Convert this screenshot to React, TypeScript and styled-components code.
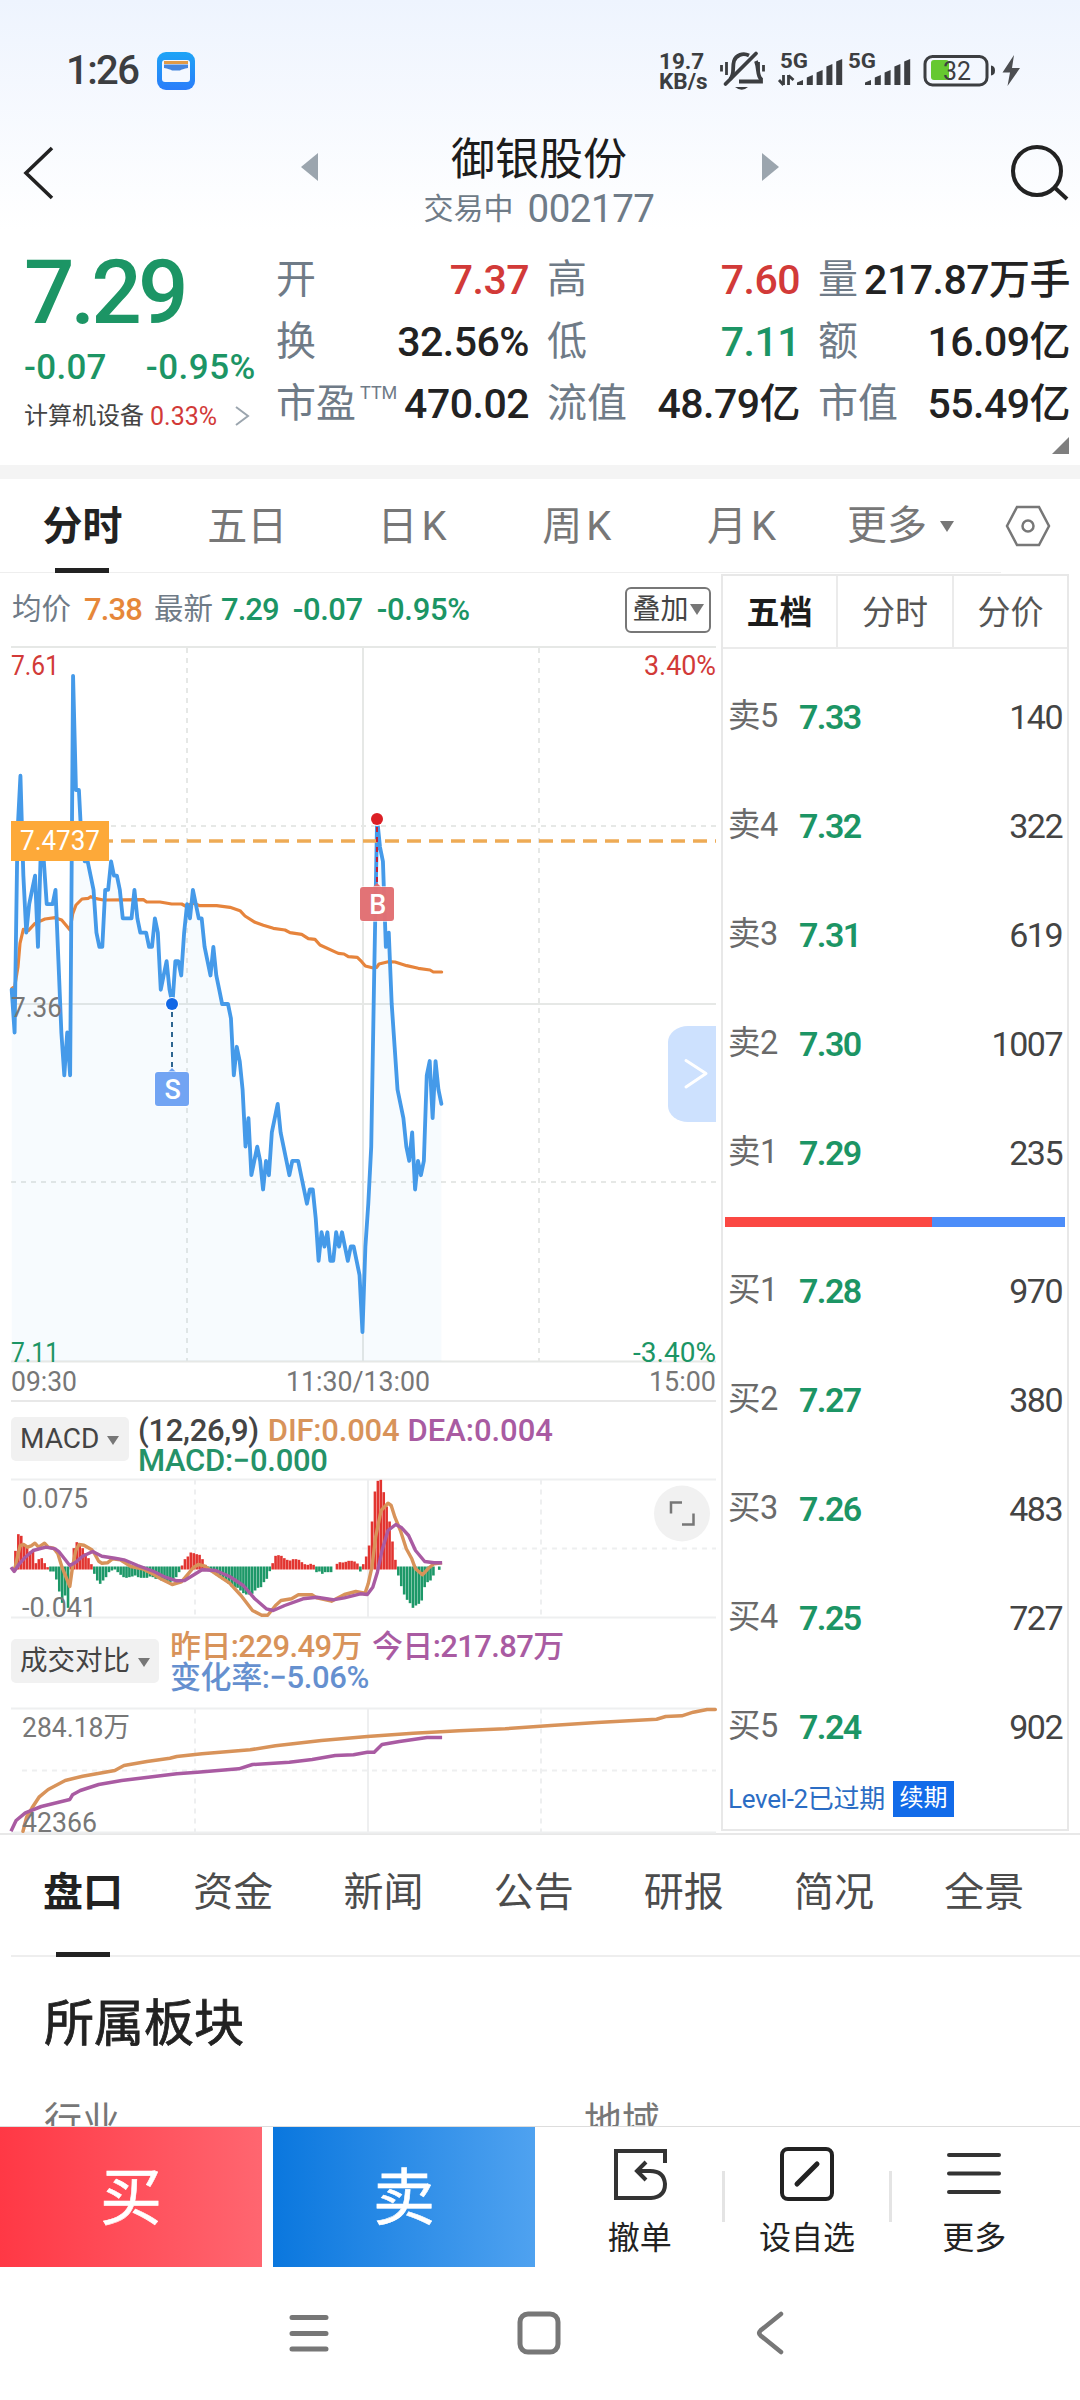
import React from "react";
import styled, { createGlobalStyle } from "styled-components";

const GREEN = "#1c9565";
const RED = "#d23a38";
const INK = "#222";
const SLATE = "#6f7b87";
const ORANGE = "#e6873a";

const Global = createGlobalStyle`
  * { box-sizing: border-box; }
  html, body { margin: 0; padding: 0; background: #fff; }
  body { font-family: Roboto, "Noto Sans CJK SC", sans-serif; color: ${INK}; }
  svg { display: block; flex: none; overflow: visible; }
  svg text { font-family: Roboto, "Noto Sans CJK SC", sans-serif; }
`;

const Screen = styled.div`
  width: 1080px;
  height: 2400px;
  overflow: hidden;
  display: flex;
  flex-direction: column;
  background: linear-gradient(#eef4fe 0, #fff 230px);
`;

const Txt = styled.span<{ $s: number; $c?: string; $w?: number; $ls?: number; $ml?: number }>`
  font-size: ${(p) => p.$s}px;
  color: ${(p) => p.$c ?? INK};
  font-weight: ${(p) => p.$w ?? 400};
  letter-spacing: ${(p) => p.$ls ?? 0}px;
  margin-left: ${(p) => p.$ml ?? 0}px;
  white-space: nowrap;
  line-height: 1;
`;

/* ---------- status bar ---------- */
const StatusBar = styled.div`
  height: 120px;
  padding: 22px 57px 0 66px;
  display: flex;
  align-items: center;
  flex: none;
`;
const Spacer = styled.div`flex: 1;`;
const AppIcon = styled.div`
  width: 38px;
  height: 38px;
  margin-left: 19px;
  border-radius: 9px;
  background: linear-gradient(#1ea4f6, #2a7dfa);
  display: flex;
  align-items: center;
  justify-content: center;
`;
const Speed = styled.div`
  display: flex;
  flex-direction: column;
  font-size: 22.5px;
  font-weight: 700;
  line-height: 20px;
  color: #3c3e41;
  width: 56px;
`;

/* ---------- title ---------- */
const TitleBar = styled.div`
  height: 120px;
  padding: 0 11px 0 23px;
  display: flex;
  justify-content: space-between;
  flex: none;
`;
const TitleSwitch = styled.div`
  width: 478px;
  display: flex;
  justify-content: space-between;
`;
const TitleText = styled.div`
  display: flex;
  flex-direction: column;
  align-items: center;
  padding: 18px 2px 0 0;
  gap: 5px;
`;
const SubTitle = styled.div`
  display: flex;
  align-items: center;
  gap: 14px;
  height: 44px;
`;
const IconTop = styled.div<{ $t: number; $w?: number }>`
  padding-top: ${(p) => p.$t}px;
  width: ${(p) => (p.$w ? `${p.$w}px` : "auto")};
`;

/* ---------- quote ---------- */
const Quote = styled.div`
  height: 225px;
  display: flex;
  flex: none;
  padding: 0 10px 0 24px;
`;
const QuoteMain = styled.div`
  width: 252px;
  padding-top: 1px;
  display: flex;
  flex-direction: column;
`;
const Line = styled.div<{ $h: number }>`
  height: ${(p) => p.$h}px;
  display: flex;
  align-items: center;
`;
const Stats = styled.div`
  flex: 1;
  display: grid;
  grid-template-columns: 253px 253px 252px;
  grid-template-rows: 62px 62px 62px 1fr;
  column-gap: 18px;
  padding-top: 9px;
`;
const Stat = styled.div`
  display: flex;
  align-items: center;
  justify-content: space-between;
  white-space: nowrap;
`;
const StatLabel = styled.div`display: flex;`;
const Corner = styled.div`
  grid-column: 1 / -1;
  justify-self: end;
  margin: 2px 1px 0 0;
`;
const Band = styled.div`height: 14px; background: #f4f4f4; flex: none;`;

/* ---------- tabs ---------- */
const PeriodTabs = styled.div`
  height: 94px;
  display: flex;
  flex: none;
  background: linear-gradient(#eee, #eee) 0 100% / 1001px 1px no-repeat;
`;
const Tab = styled.div<{ $w: number; $on?: boolean; $c: string; $gap: number }>`
  width: ${(p) => p.$w}px;
  flex: none;
  display: flex;
  flex-direction: column;
  align-items: center;
  justify-content: space-between;
  font-size: 40px;
  line-height: 60px;
  padding-top: ${(p) => p.$gap}px;
  font-weight: ${(p) => (p.$on ? 700 : 400)};
  color: ${(p) => (p.$on ? INK : p.$c)};
  &::after {
    content: "";
    width: 54px;
    height: 5px;
    background: ${(p) => (p.$on ? INK : "transparent")};
  }
`;
const MoreTab = styled.div`
  display: flex;
  align-items: center;
  width: 160px;
  height: 92px;
  padding: 2px 0 0 23px;
  gap: 13px;
`;

/* ---------- body ---------- */
const Body = styled.div`
  display: flex;
  height: 1262px;
  flex: none;
  padding-left: 11px;
  border-bottom: 2px solid #e8e8e8;
`;
const ChartColumn = styled.div`
  width: 710px;
  display: flex;
  flex-direction: column;
`;
const ChartHead = styled.div`
  height: 73px;
  display: flex;
  align-items: center;
`;
const Overlay = styled.div`
  width: 86px;
  height: 46px;
  margin-right: 10px;
  border: 2px solid #777;
  border-radius: 6px;
  display: flex;
  align-items: center;
  justify-content: center;
  gap: 1px;
`;
const IndicatorHead = styled.div<{ $h: number; $pt: number; $rule?: boolean }>`
  height: ${(p) => p.$h}px;
  display: flex;
  padding-top: ${(p) => p.$pt}px;
  gap: ${(p) => (p.$rule ? 9 : 11)}px;
  width: 705px;
  border-top: ${(p) => (p.$rule ? "2px solid #e8e8e8" : "none")};
`;
const Chip = styled.div<{ $w: number }>`
  width: ${(p) => p.$w}px;
  height: 44px;
  flex: none;
  background: #f1f1f1;
  border-radius: 5px;
  display: flex;
  align-items: center;
  padding-left: 9px;
  gap: 8px;
  svg { margin-top: 3px; }
`;
const Values = styled.div<{ $mt: number }>`
  margin-top: ${(p) => p.$mt}px;
`;
const ValueRow = styled.div<{ $h: number }>`
  height: ${(p) => p.$h}px;
  display: flex;
  span { line-height: 34px; }
`;

/* ---------- order book ---------- */
const Book = styled.div`
  width: 348px;
  margin-top: 1px;
  height: 1257px;
  border: 2px solid #e8e8e8;
  display: flex;
  flex-direction: column;
`;
const BookTabs = styled.div`
  display: grid;
  grid-template-columns: 113px 116px 115px;
  height: 73px;
  flex: none;
  border-bottom: 2px solid #ebebeb;
`;
const BookTab = styled.div<{ $on?: boolean }>`
  display: flex;
  align-items: center;
  justify-content: center;
  padding-top: 2px;
  font-size: 33px;
  line-height: 1;
  color: ${(p) => (p.$on ? "#1c1c1c" : "#555")};
  font-weight: ${(p) => (p.$on ? 700 : 400)};
  & + & { border-left: 2px solid #ebebeb; }
`;
const BookRow = styled.div`
  height: 109px;
  flex: none;
  display: grid;
  grid-template-columns: 71px 1fr auto;
  align-items: center;
  padding: 2px 5px 0 5px;
`;
const Balance = styled.div`
  height: 10px;
  margin: 11px 2px 8px 2px;
  flex: none;
  display: grid;
  grid-template-columns: 207px 1fr;
  background: #4c8df9;
  &::before { content: ""; background: #fb4843; }
`;
const LevelRow = styled.div`
  height: 37px;
  display: flex;
  align-items: center;
  padding-left: 5px;
  gap: 8px;
`;
const Renew = styled.div`
  width: 61px;
  height: 36px;
  background: #126be9;
  color: #fff;
  font-size: 24px;
  line-height: 34px;
  text-align: center;
`;

/* ---------- bottom ---------- */
const InfoTabs = styled.div`
  height: 122px;
  padding-left: 8px;
  display: flex;
  flex: none;
  background: linear-gradient(#eee, #eee) 11px 100% / 100% 2px no-repeat;
`;
const Section = styled.div`
  height: 169px;
  flex: none;
  overflow: hidden;
  padding: 37px 44px 0;
`;
const SectionTitle = styled.div`
  font-size: 50px;
  line-height: 60px;
  -webkit-text-stroke: 0.8px currentColor;
`;
const SectionGrid = styled.div`
  display: grid;
  grid-template-columns: 540px 1fr;
  padding-top: 42px;
  font-size: 38px;
  line-height: 50px;
  color: #777;
`;
const ActionBar = styled.div`
  height: 141px;
  flex: none;
  display: flex;
  border-top: 1px solid #ddd;
`;
const TradeButton = styled.div<{ $from: string; $to: string }>`
  width: 262px;
  margin-right: 11px;
  background: linear-gradient(90deg, ${(p) => p.$from}, ${(p) => p.$to});
  color: #fff;
  font-size: 62px;
  line-height: 143px;
  text-align: center;
  -webkit-text-stroke: 0.6px currentColor;
`;
const Actions = styled.div`
  flex: 1;
  display: flex;
  padding: 0 22px 0 10px;
`;
const Action = styled.div`
  flex: 1;
  display: flex;
  flex-direction: column;
  align-items: center;
  justify-content: space-between;
  padding: 19px 0 12px;
  font-size: 32px;
  line-height: 34px;
`;
const Divider = styled.div`width: 3px; margin: 44px -1.5px 45px; background: #e4e4e4;`;
const NavBar = styled.div`
  flex: 1;
  display: flex;
  justify-content: space-between;
  padding: 44px 296px 0 288px;
`;

/* ---------- data ---------- */
/* price per minute, in cents relative to the previous close (7.36) */
const PRICE = [
  1, -2, 12, 16, 9, 5, 7, 8, 9, 4, 11, 10, 7, 7, 7, 8, 3, -2, -5, -2, -5, 23, 15, 15, 11, 10, 10, 9, 8, 5, 4, 4, 8, 8, 10,
  9, 9, 8, 6, 6, 6, 6, 8, 6, 5, 5, 5, 4, 4, 6, 5, 1, 2, 3, 1, 0, 3, 3, 2, 5, 7, 6, 8, 7, 6, 6, 4, 3, 2, 4, 2, 1, 0, 0, 0,
  -1, -5, -3, -4, -6, -10, -8, -12, -11, -10, -11, -13, -11, -12, -9, -8, -7, -9, -10, -11, -12, -11, -11, -11, -12, -13,
  -14, -13, -13, -15, -18, -16, -17, -16, -18, -18, -16, -17, -16, -17, -18, -17, -17, -18, -19, -23, -17, -14, -10, 2, 13,
  11, 10, 4, 5, 0, -3, -6, -7, -8, -10, -11, -9, -13, -11, -12, -11, -5, -4, -8, -4, -6, -7,
];
const priceX = (m: number) => 35 + m * 8.77;
const priceY = (c: number) => 1092 - c * 42.8;
const pricePoints = PRICE.map((c, m) => `${priceX(m).toFixed(1)},${priceY(c).toFixed(1)}`).join(" ");

const AVERAGE =
  "36,1045 44,1040 54,980 60,910 70,868 85,872 105,850 135,837 165,833 185,840 210,870 218,822 228,795 246,777 265,775 272,770 285,775 310,780 430,779 440,786 480,786 515,792 545,792 556,798 580,790 600,797 650,797 690,802 720,812 735,828 765,847 790,856 820,865 855,870 870,878 905,883 925,896 945,898 960,915 1015,940 1032,942 1045,950 1072,952 1085,965 1096,978 1120,984 1130,982 1137,972 1165,965 1185,966 1220,977 1255,985 1290,990 1300,996 1325,996";

/* histogram heights, three units per pixel; positive above the axis */
const HIST = [
  0, 53, 103, 98, 73, 66, 51, 51, 16, 28, 31, 16, 4, -12, -12, -36, -72, -106, -84, -121, 16, 61, 79, 69, 61, 46, 31, 13,
  -19, -39, -49, -39, -29, -14, -9, -6, -14, -22, -29, -31, -29, -27, -24, -29, -31, -31, -31, -27, -29, -34, -34, -39, -39,
  -41, -44, -41, -29, -14, 9, 28, 36, 48, 46, 43, 41, 28, 11, -9, -14, -19, -25, -31, -37, -41, -49, -57, -59, -61, -69,
  -77, -81, -81, -79, -69, -61, -59, -44, -34, -11, 16, 38, 40, 38, 31, 26, 24, 28, 28, 26, 19, 13, 11, 14, 11, -14, -12,
  -19, -14, -14, -14, 0, 14, 19, 18, 20, 23, 23, 21, 15, -12, 13, 36, 69, 141, 231, 263, 266, 229, 186, 141, 81, 26, -24,
  -56, -81, -97, -107, -121, -114, -109, -99, -59, -44, -39, -24, 0, -7,
];

type P = [number, number];
const DIF: P[] = [[27,540],[33,530],[38,500],[44,465],[52,462],[60,470],[68,466],[76,458],[84,470],[97,458],[105,470],[117,473],[126,490],[135,530],[152,588],[158,530],[165,480],[172,462],[183,464],[200,478],[206,490],[215,512],[222,518],[234,517],[245,505],[262,508],[285,528],[310,535],[335,552],[350,565],[375,582],[395,574],[410,550],[422,530],[432,522],[445,526],[470,550],[500,578],[525,615],[550,660],[570,674],[583,674],[600,645],[612,630],[635,625],[650,613],[680,613],[690,622],[722,632],[750,612],[775,603],[795,608],[802,580],[810,530],[818,440],[830,360],[845,338],[852,345],[860,380],[872,420],[885,475],[897,505],[905,535],[920,553],[932,535],[945,520],[963,517]];
const DEA: P[] = [[24,530],[31,543],[42,520],[55,500],[72,480],[100,470],[120,475],[128,483],[152,525],[165,515],[180,497],[202,483],[222,497],[250,503],[270,508],[300,525],[335,543],[360,560],[385,571],[402,570],[440,538],[470,540],[500,558],[530,585],[555,625],[580,655],[595,660],[620,645],[660,625],[690,620],[725,628],[750,622],[785,610],[800,612],[812,590],[822,545],[832,480],[845,420],[862,402],[875,412],[890,435],[905,480],[925,513],[945,517],[963,517]];
const YESTERDAY: P[] = [[50,662],[58,620],[70,592],[85,560],[105,537],[142,510],[180,497],[250,480],[270,465],[320,453],[370,443],[385,438],[440,430],[545,418],[600,406],[700,390],[800,378],[900,368],[1000,361],[1100,355],[1200,345],[1300,336],[1430,326],[1450,318],[1485,316],[1510,305],[1540,297],[1558,297]];
const TODAY: P[] = [[24,662],[35,630],[55,607],[90,588],[152,567],[158,553],[175,540],[215,522],[265,510],[385,490],[430,485],[520,475],[550,462],[630,455],[680,447],[730,435],[770,433],[800,425],[815,425],[832,402],[870,393],[930,381],[963,381]];
const plot = (pts: P[], top: number) => pts.map(([x, y]) => `${(x / 2.178).toFixed(1)},${(top + y / 3).toFixed(1)}`).join(" ");

const Label = ({ x, y, w, c, s = 28, end, children }: { x: number; y: number; w: number; c: string; s?: number; end?: boolean; children: string }) => (
  <text x={x} y={y} fill={c} fontSize={s} textLength={w} lengthAdjust="spacingAndGlyphs" textAnchor={end ? "end" : "start"}>{children}</text>
);

const Caret = ({ w, h, c = "#777" }: { w: number; h: number; c?: string }) => (
  <svg width={w} height={h} viewBox="0 0 10 10" preserveAspectRatio="none"><path d="M0 0H10L5 10Z" fill={c} /></svg>
);

const Marker = ({ x, dot, top, letter, fill, stroke }: { x: number; dot: number; top: number; letter: string; fill: string; stroke: string }) => (
  <g>
    <path d={`M${x} ${dot + 8}V${top - 3}`} stroke={letter === "S" ? "#2d6590" : "#c02038"} strokeWidth="2" strokeDasharray="5 5" />
    <circle cx={x} cy={dot} r="7" fill="#fff" />
    <circle cx={x} cy={dot} r="6" fill={stroke} />
    <path d={`M${x - 4} ${top}L${x} ${top - 4}L${x + 4} ${top}Z`} fill={fill} />
    <rect x={x - 18} y={top - 1} width="36" height="36" rx="4" fill="#fff" opacity="0.6" />
    <rect x={x - 17} y={top} width="34" height="34" rx="3" fill={fill} opacity="0.95" />
    <text x={x + 0.7} y={top + 27} fontSize="27" fontWeight="500" fill="#fff" textAnchor="middle">{letter}</text>
  </g>
);

const PriceChart = () => (
  <svg width="706" height="754" viewBox="11 646 706 754">
    <g stroke="#e6e8e6" strokeWidth="2" fill="none">
      <path d="M11 647H716M11 1004H716M11 1361.5H716M363 647V1362" />
      <path d="M187 648V1361M539 648V1361" strokeDasharray="5 5" />
      <path d="M11 826H716M11 1182H716" strokeDasharray="5 5" />
    </g>
    <g transform="translate(0 640) scale(0.33333)">
      <polygon points={`35,2163 ${pricePoints} ${priceX(PRICE.length - 1)},2163`} fill="#3c97ee" opacity="0.045" />
      <polyline points={AVERAGE} fill="none" stroke="#e6843c" strokeWidth="9.500" strokeLinejoin="round" strokeLinecap="round" />
      <polyline points={pricePoints} fill="none" stroke="#459ae9" strokeWidth="11.500" strokeLinejoin="round" strokeLinecap="round" />
    </g>
    <path d="M121 841H716" stroke="#eeab55" strokeWidth="3.4" strokeDasharray="14 8" />
    <rect x="11" y="821" width="98" height="40" fill="#fda939" />
    <path d="M109 841h4" stroke="#eeab55" strokeWidth="3.4" />
    <Label x={20} y={850} w={80} c="#fff" s={27}>7.4737</Label>
    <Marker x={172} dot={1004} top={1072} letter="S" fill="#6a9ff2" stroke="#1268e6" />
    <Marker x={377} dot={819} top={887} letter="B" fill="#e06c6f" stroke="#dc1f25" />
    <Label x={11} y={674.5} w={48} c={RED}>7.61</Label>
    <Label x={716} y={675} w={72} c={RED} end>3.40%</Label>
    <Label x={11} y={1016.5} w={51} c="#777">7.36</Label>
    <Label x={11} y={1361.5} w={48} c={GREEN}>7.11</Label>
    <Label x={716} y={1362} w={83} c={GREEN} end>-3.40%</Label>
    <Label x={11} y={1390.5} w={66} c="#777">09:30</Label>
    <Label x={286} y={1390.5} w={144} c="#777">11:30/13:00</Label>
    <Label x={716} y={1390.5} w={67} c="#777" end>15:00</Label>
    <path d="M716 1026H688a20 16 0 0 0-20 16V1106a20 16 0 0 0 20 16H716Z" fill="#cde1fe" />
    <path d="M686 1060.500L706 1073.500L686 1087" fill="none" stroke="#fff" strokeWidth="3" strokeLinecap="round" strokeLinejoin="round" />
  </svg>
);

const SubGrid = ({ top, mid, bottom }: { top: number; mid: number; bottom: number }) => (
  <g stroke="#eeeff0" strokeWidth="2" fill="none">
    <path d={`M11 ${top}H716M11 ${bottom}H716M368 ${top}V${bottom}`} />
    <path d={`M195 ${top}V${bottom}M541 ${top}V${bottom}M22 ${mid}H716`} strokeDasharray="5 5" />
  </g>
);

const MacdChart = () => (
  <svg width="706" height="141" viewBox="11 1476.500 706 141">
    <SubGrid top={1479} mid={1548} bottom={1617} />
    {HIST.map((h, i) =>
      h === 0 ? null : (
        <rect key={i} x={11.2 + i * 2.923} width="2.600" y={h > 0 ? 1568 - h / 3 : 1566} height={Math.abs(h) / 3 + 1} fill={h > 0 ? "#e23430" : "#1d9868"} />
      )
    )}
    <polyline points={plot(DIF, 1390)} fill="none" stroke="#d8935a" strokeWidth="3.400" strokeLinejoin="round" />
    <polyline points={plot(DEA, 1390)} fill="none" stroke="#a95ba2" strokeWidth="3.400" strokeLinejoin="round" />
    <Label x={22} y={1507.5} w={66} c="#777">0.075</Label>
    <Label x={22} y={1616} w={75} c="#777">-0.041</Label>
    <circle cx="682" cy="1513" r="28" fill="#f1f1f1" />
    <path d="M671 1513V1502H682M693.500 1513V1524H682" fill="none" stroke="#777" strokeWidth="2.500" />
  </svg>
);

const VolumeChart = () => (
  <svg width="706" height="127" viewBox="11 1705.500 706 127">
    <SubGrid top={1708} mid={1770} bottom={1832} />
    <polyline points={plot(YESTERDAY, 1610)} fill="none" stroke="#d8935a" strokeWidth="3.500" strokeLinejoin="round" strokeLinecap="round" />
    <polyline points={plot(TODAY, 1610)} fill="none" stroke="#a95ba2" strokeWidth="3.500" strokeLinejoin="round" />
    <Label x={22} y={1736} w={108} c="#777">284.18万</Label>
    <Label x={22} y={1831} w={75} c="#777">42366</Label>
  </svg>
);

const StatusIcons = () => (
  <svg width="308" height="44" viewBox="715 48 308 44">
    <g fill="none" stroke="#3c3e41" strokeWidth="3.800">
      <path d="M730 78C735 74 732 66 734 60C736 54 743 51.500 749 54.500M756 60C759 68 757 75 761 78V80.500H739" />
      <path d="M725.500 83L756 52.500" strokeLinecap="round" />
      <path d="M721.500 64V70.500M726.500 61V74M758.500 61V74M763.500 64V70.500" strokeWidth="2.800" />
    </g>
    <path d="M735 86H748Q742 91.500 735 86Z" fill="#3c3e41" />
    <text x="780" y="67" fontSize="20.500" fontWeight="700" fill="#3c3e41" textLength="28" lengthAdjust="spacingAndGlyphs">5G</text>
    <text x="848" y="67" fontSize="20.500" fontWeight="700" fill="#3c3e41" textLength="28" lengthAdjust="spacingAndGlyphs">5G</text>
    <g stroke="#3c3e41" strokeWidth="2.800" fill="none">
      <path d="M783.500 74V84M788.500 74V84" /><path d="M779 79L783.500 84M788.500 74.500L793.500 79" />
    </g>
    {[0, 68].map((o) => (
      <g key={o} fill="#3c3e41">
        {[7, 12, 17, 23, 28].map((h, i) => (
          <path key={h} d={`M${797 + o + i * 9.800} ${86 - h + 2.500}l6 -2.500V84h-6Z`} />
        ))}
      </g>
    ))}
    <rect x="925" y="55.500" width="62" height="28.500" rx="7.500" fill="none" stroke="#3c3e41" strokeWidth="3" />
    <rect x="931" y="59" width="18" height="20" rx="3" fill="#66c830" />
    <text x="943" y="79" fontSize="26" fill="#3c3e41" textLength="28" lengthAdjust="spacingAndGlyphs">32</text>
    <path d="M991 64.500Q995 65 995 69.500Q995 74 991 74.500Z" fill="#3c3e41" />
    <path d="M1014 54L1002.500 71.500H1010L1007.500 85L1020 67H1012Z" fill="#4c4e51" />
  </svg>
);

const STATS: [string, string, string][] = [
  ["开", "7.37", RED], ["高", "7.60", RED], ["量", "217.87万手", INK],
  ["换", "32.56%", INK], ["低", "7.11", GREEN], ["额", "16.09亿", INK],
  ["市盈", "470.02", INK], ["流值", "48.79亿", INK], ["市值", "55.49亿", INK],
];
const SELLS = [["卖5", "7.33", "140"], ["卖4", "7.32", "322"], ["卖3", "7.31", "619"], ["卖2", "7.30", "1007"], ["卖1", "7.29", "235"]];
const BUYS = [["买1", "7.28", "970"], ["买2", "7.27", "380"], ["买3", "7.26", "483"], ["买4", "7.25", "727"], ["买5", "7.24", "902"]];

const BookLine = ({ row }: { row: string[] }) => (
  <BookRow>
    <Txt $s={32.5} $c="#6a6a6a" $ls={-0.5}>{row[0]}</Txt>
    <Txt $s={34} $c={GREEN} $w={600} $ls={-1.6}>{row[1]}</Txt>
    <Txt $s={34} $c="#444" $ls={-1.5}>{row[2]}</Txt>
  </BookRow>
);

export default function App() {
  return (
    <Screen>
      <Global />
      <StatusBar>
        <Txt $s={40} $c="#3c3e41" $w={500} $ls={-1.6}>1:26</Txt>
        <AppIcon>
          <svg width="28" height="22" viewBox="0 0 28 22">
            <rect width="28" height="22" rx="3" fill="#f4f8ff" />
            <rect x="2" y="1" width="24" height="3" fill="#e29a45" />
            <path d="M2 4.500H26V8Q20 9 18 10.500H10Q8 9 2 8Z" fill="#4585de" />
          </svg>
        </AppIcon>
        <Spacer />
        <Speed><span>19.7</span><span>KB/s</span></Speed>
        <StatusIcons />
      </StatusBar>

      <TitleBar>
        <IconTop $t={26} $w={48}>
          <svg width="32" height="54" viewBox="0 0 32 54"><path d="M29 2L3 27L29 52" fill="none" stroke={INK} strokeWidth="3.600" /></svg>
        </IconTop>
        <TitleSwitch>
          <IconTop $t={33}><svg width="17" height="28" viewBox="0 0 17 28"><path d="M17 0V28L0 14Z" fill="#9ba5ae" /></svg></IconTop>
          <TitleText>
            <Txt $s={44} $c="#1c1c1c">御银股份</Txt>
            <SubTitle>
              <Txt $s={30} $c={SLATE}>交易中</Txt>
              <Txt $s={38.5} $c={SLATE} $ls={-0.5}>002177</Txt>
            </SubTitle>
          </TitleText>
          <IconTop $t={33}><svg width="17" height="28" viewBox="0 0 17 28"><path d="M0 0V28L17 14Z" fill="#9ba5ae" /></svg></IconTop>
        </TitleSwitch>
        <IconTop $t={24}>
          <svg width="60" height="58" viewBox="0 0 60 58">
            <circle cx="28" cy="27" r="24" fill="none" stroke={INK} strokeWidth="4" />
            <path d="M45 43L58 55" stroke={INK} strokeWidth="4" />
          </svg>
        </IconTop>
      </TitleBar>

      <Quote>
        <QuoteMain>
          <Line $h={102}><Txt $s={89} $c={GREEN} $w={500} $ls={-4}>7.29</Txt></Line>
          <Line $h={48}>
            <Txt $s={35} $c={GREEN} $w={500} $ls={0.3}>-0.07</Txt>
            <Txt $s={35} $c={GREEN} $w={500} $ml={39} $ls={0.5}>-0.95%</Txt>
          </Line>
          <Line $h={50}>
            <Txt $s={24} $c="#444">计算机设备</Txt>
            <Txt $s={25} $c={RED} $ml={6}>0.33%</Txt>
            <Spacer />
            <svg width="43" height="20" viewBox="0 0 43 20"><path d="M3 1L15 10L3 19" fill="none" stroke="#9ba5ae" strokeWidth="2" /></svg>
          </Line>
        </QuoteMain>
        <Stats>
          {STATS.map(([l, v, c]) => (
            <Stat key={l}>
              <StatLabel>
                <Txt $s={40} $c={SLATE}>{l}</Txt>
                {l === "市盈" && <Txt $s={18} $c={SLATE} $ml={4}>TTM</Txt>}
              </StatLabel>
              <Txt $s={41} $c={c} $w={500} $ls={-0.5}>{v}</Txt>
            </Stat>
          ))}
          <Corner><svg width="17" height="17" viewBox="0 0 17 17"><path d="M17 0V17H0Z" fill="#7f7f7f" /></svg></Corner>
        </Stats>
      </Quote>
      <Band />

      <PeriodTabs>
        {["分时", "五日", "日 K", "周 K", "月 K"].map((t, i) => (
          <Tab key={t} $w={164.8} $on={i === 0} $c="#777" $gap={18}>{t.replace(" ", "\u200a")}</Tab>
        ))}
        <MoreTab>
          <Txt $s={40} $c="#777">更多</Txt>
          <Caret w={14} h={11} />
        </MoreTab>
        <IconTop $t={26}>
          <svg width="88" height="42" viewBox="0 0 88 42">
            <path d="M33 2H55L65 21L55 40H33L23 21Z" fill="none" stroke="#777" strokeWidth="2.500" />
            <circle cx="44" cy="21" r="5.500" fill="none" stroke="#777" strokeWidth="2.500" />
          </svg>
        </IconTop>
      </PeriodTabs>

      <Body>
        <ChartColumn>
          <ChartHead>
            <Txt $s={29.5} $c={SLATE} $ml={1}>均价</Txt>
            <Txt $s={31} $c={ORANGE} $w={500} $ml={13} $ls={-0.9}>7.38</Txt>
            <Txt $s={29.5} $c={SLATE} $ml={12}>最新</Txt>
            <Txt $s={31} $c={GREEN} $w={500} $ml={8} $ls={-0.9}>7.29</Txt>
            <Txt $s={31} $c={GREEN} $w={500} $ml={14} $ls={-0.4}>-0.07</Txt>
            <Txt $s={31} $c={GREEN} $w={500} $ml={14} $ls={-0.3}>-0.95%</Txt>
            <Spacer />
            <Overlay><Txt $s={28} $c="#444">叠加</Txt><Caret w={14} h={11} /></Overlay>
          </ChartHead>
          <PriceChart />
          <IndicatorHead $h={77} $pt={15} $rule>
            <Chip $w={118}><Txt $s={28} $c="#444">MACD</Txt><Caret w={12} h={9} /></Chip>
            <Values $mt={-3}>
              <ValueRow $h={30}>
                <Txt $s={31} $c="#444" $w={500} $ls={-0.3}>(12,26,9)</Txt>
                <Txt $s={31} $c="#d8935a" $w={500} $ml={9} $ls={-0.2}>DIF:0.004</Txt>
                <Txt $s={31} $c="#a95ba2" $w={500} $ml={8}>DEA:0.004</Txt>
              </ValueRow>
              <ValueRow $h={29}><Txt $s={31} $c="#259268" $w={500} $ls={-0.3}>MACD:−0.000</Txt></ValueRow>
            </Values>
          </IndicatorHead>
          <MacdChart />
          <IndicatorHead $h={88} $pt={21}>
            <Chip $w={148}><Txt $s={27.5} $c="#444">成交对比</Txt><Caret w={12} h={9} /></Chip>
            <Values $mt={-9}>
              <ValueRow $h={31}>
                <Txt $s={31} $c="#d8935a" $w={500} $ls={-0.6}>昨日:229.49万</Txt>
                <Txt $s={31} $c="#a95ba2" $w={500} $ml={10} $ls={-0.6}>今日:217.87万</Txt>
              </ValueRow>
              <ValueRow $h={31}><Txt $s={31} $c="#6590cf" $w={500} $ls={-0.4}>变化率:−5.06%</Txt></ValueRow>
            </Values>
          </IndicatorHead>
          <VolumeChart />
        </ChartColumn>

        <Book>
          <BookTabs>
            <BookTab $on>五档</BookTab>
            <BookTab>分时</BookTab>
            <BookTab>分价</BookTab>
          </BookTabs>
          <Spacer />
          {SELLS.map((r) => <BookLine key={r[0]} row={r} />)}
          <Balance />
          {BUYS.map((r) => <BookLine key={r[0]} row={r} />)}
          <LevelRow>
            <Txt $s={26} $c="#2b6dc4" $ls={-0.3}>Level-2已过期</Txt>
            <Renew>续期</Renew>
          </LevelRow>
          <Spacer />
        </Book>
      </Body>

      <InfoTabs>
        {["盘口", "资金", "新闻", "公告", "研报", "简况", "全景"].map((t, i) => (
          <Tab key={t} $w={150.2} $on={i === 0} $c="#4c4c4c" $gap={28}>{t}</Tab>
        ))}
      </InfoTabs>
      <Section>
        <SectionTitle>所属板块</SectionTitle>
        <SectionGrid><span>行业</span><span>地域</span></SectionGrid>
      </Section>

      <ActionBar>
        <TradeButton $from="#ff3845" $to="#ff6670">买</TradeButton>
        <TradeButton $from="#0a77de" $to="#4fa2f0">卖</TradeButton>
        <Actions>
          <Action>
            <svg width="56" height="56" viewBox="0 0 56 56" fill="none" stroke="#333" strokeWidth="4">
              <path d="M53 17V5H4V52H39Q53 51 53 38Q52 25 38 25H26" /><path d="M34 16L25 25L34 34" />
            </svg>
            撤单
          </Action>
          <Divider />
          <Action>
            <svg width="56" height="56" viewBox="0 0 56 56" fill="none" stroke="#222">
              <rect x="3" y="3" width="50" height="50" rx="6" strokeWidth="4" /><path d="M18 38L38 18" strokeWidth="5" strokeLinecap="round" />
            </svg>
            设自选
          </Action>
          <Divider />
          <Action>
            <svg width="56" height="56" viewBox="0 0 56 56" stroke="#333" strokeWidth="4" strokeLinecap="round">
              <path d="M3 9H53M3 27.500H53M3 46H53" />
            </svg>
            更多
          </Action>
        </Actions>
      </ActionBar>
      <NavBar>
        <svg width="42" height="44" viewBox="0 0 42 44" stroke="#777" strokeWidth="5" strokeLinecap="round"><path d="M4 6.500H38M4 22.500H38M4 38H38" /></svg>
        <svg width="44" height="44" viewBox="0 0 44 44"><rect x="3" y="3" width="38" height="38" rx="8" fill="none" stroke="#777" strokeWidth="5" /></svg>
        <svg width="36" height="44" viewBox="-8 0 36 44"><path d="M25 3L4.500 19.500Q2 22 4.500 24.500L25 41" fill="none" stroke="#777" strokeWidth="4.500" strokeLinecap="round" /></svg>
      </NavBar>
    </Screen>
  );
}
